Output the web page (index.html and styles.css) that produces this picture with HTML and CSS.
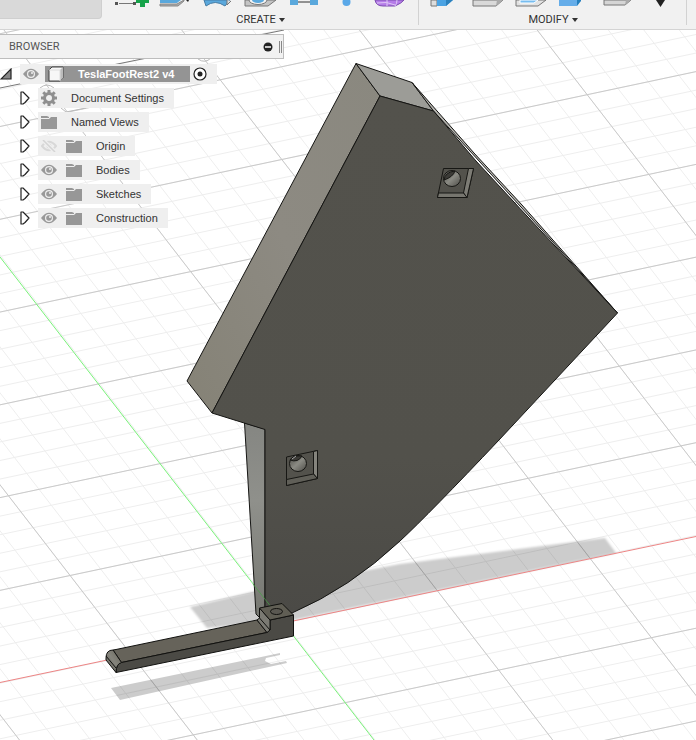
FILE: index.html
```html
<!DOCTYPE html>
<html lang="en">
<head>
<meta charset="utf-8">
<meta name="viewport" content="width=device-width, initial-scale=1">
<title>TeslaFootRest2 v4</title>
<link rel="stylesheet" href="styles.css">
</head>
<body>
<svg class="defs" aria-hidden="true">
  <symbol id="eye" viewBox="0 0 16 12"><path d="M0 6Q8-4.500 16 6Q8 16.500 0 6Z" fill="#999"/><circle cx="8" cy="6" r="4" fill="#efefef"/><circle cx="8" cy="6" r="2.800" fill="#999"/><circle cx="9" cy="5" r="1" fill="#efefef"/></symbol>
  <symbol id="eye-off" viewBox="0 0 16 12"><path d="M1 6Q8-2.500 15 6Q8 14.500 1 6Z" fill="none" stroke="#d8d8d8" stroke-width="2"/><circle cx="8" cy="6" r="2.500" fill="#d8d8d8"/><path d="M2 0L14 12" stroke="#efefef" stroke-width="4"/><path d="M2 0L14 12" stroke="#d4d4d4" stroke-width="1.500"/></symbol>
  <symbol id="folder" viewBox="0 0 16 14"><path d="M0 1H6L8 2V3H0ZM0 4H8L10 2H16V14H0Z" fill="#979797"/></symbol>
  <symbol id="gear" viewBox="0 0 16 16"><circle cx="8" cy="8" r="4.500" fill="none" stroke="#8f8f8f" stroke-width="3"/><path d="M8 0V3M8 13V16M0 8H3M13 8H16M2.300 2.300L4.500 4.500M11.500 11.500L13.700 13.700M2.300 13.700L4.500 11.500M11.500 4.500L13.700 2.300" stroke="#8f8f8f" stroke-width="3"/></symbol>
  <symbol id="twisty" viewBox="0 0 10 14"><path d="M1 1H3L9 7L5 11.500L3 13H1Z" fill="#fff" stroke="#222" stroke-width="1.200" stroke-linejoin="round"/></symbol>
</svg>

<header class="toolbar">
  <div class="workspace"></div>
  <section class="group group-create">
    <div class="tools">
      <button type="button" aria-label="Create sketch"><svg viewBox="0 0 43 7"><path d="M9 3.500H26" stroke="#777"/><path d="M6.500 2V5M24.500 2V5" stroke="#555" stroke-width="3"/><path d="M26 0H39V3H35V7H30V3H26Z" fill="#16a34a"/></svg></button>
      <button type="button" aria-label="Extrude"><svg viewBox="0 0 43 7"><path d="M7 0H28L24 3H7Z" fill="#5aa8dc"/><path d="M7 4H24L31 0V1L25 6H7Z" fill="#aaa" stroke="#888"/><path d="M33 0h3l-1 2z" fill="#222"/></svg></button>
      <button type="button" aria-label="Revolve"><svg viewBox="0 0 43 7"><path d="M8 0L10 6Q19-1 29 6L34 0Z" fill="#5aa8dc" stroke="#477da5"/><path d="M31 0V5L35 1" fill="#ddd" stroke="#777"/></svg></button>
      <button type="button" aria-label="Hole"><svg viewBox="0 0 43 7"><path d="M6 0V6H29L37 0Z" fill="#c4c4c4" stroke="#777"/><ellipse cx="19" cy="0" rx="9" ry="4.500" fill="#f5f5f5" stroke="#777"/><ellipse cx="19" cy="0" rx="6" ry="3" fill="#5aa8dc"/></svg></button>
      <button type="button" aria-label="Pattern"><svg viewBox="0 0 43 7"><path d="M16 2H28" stroke="#333"/><path d="M8 0H16V5H8ZM28 0H36V5H28Z" fill="#5aa8dc"/></svg></button>
      <button type="button" aria-label="Point"><svg viewBox="0 0 43 7"><circle cx="21.500" cy="2" r="4" fill="#5aa8e8"/></svg></button>
      <button type="button" aria-label="Form"><svg viewBox="0 0 43 7"><path d="M7 0Q8 6 15 6H27Q34 3 36 0Z" fill="#b57ce8" stroke="#7b4cae"/><path d="M19 0V6M9 3Q19 1 27 5M29 0Q29 4 27 6" fill="none" stroke="#dfc7f6"/></svg></button>
    </div>
    <button type="button" class="menu">CREATE <span class="caret"></span></button>
  </section>
  <section class="group group-modify">
    <div class="tools">
      <button type="button" aria-label="Press pull"><svg viewBox="0 0 43 7"><path d="M7 0V6H13V0Z" fill="#ddd" stroke="#777"/><path d="M13 0V6H22L29 0Z" fill="#4ba3e3"/><path d="M22 6L29 0V-1H22Z" fill="#2c81bd"/></svg></button>
      <button type="button" aria-label="Fillet"><svg viewBox="0 0 43 7"><path d="M6 0V6H29L36 0Z" fill="#d9d9d9" stroke="#777"/><path d="M29 6L30 0H36Z" fill="#aaa"/></svg></button>
      <button type="button" aria-label="Shell"><svg viewBox="0 0 43 7"><path d="M6 0V6H28L36 0Z" fill="#e2e2e2" stroke="#777"/><path d="M10 0V3H24L28 0Z" fill="#77bdf0" stroke="#fff"/></svg></button>
      <button type="button" aria-label="Combine"><svg viewBox="0 0 43 7"><path d="M6 0V6H24V0Z" fill="#65ade9"/><path d="M24 6L28 1V0H24Z" fill="#247fbe"/></svg></button>
      <button type="button" aria-label="Offset face"><svg viewBox="0 0 43 7"><path d="M8 0V5H29L35 0Z" fill="#d5d5d5" stroke="#777"/><path d="M29 5L30 0H35Z" fill="#aaa"/></svg></button>
      <button type="button" aria-label="Move"><svg viewBox="0 0 43 7"><path d="M17 0H26L21.500 7Z" fill="#222"/></svg></button>
    </div>
    <button type="button" class="menu">MODIFY <span class="caret"></span></button>
  </section>
</header>

<main class="stage">
  <svg class="scene" viewBox="0 30 696 710" preserveAspectRatio="xMinYMin slice" role="img" aria-label="3D view of the foot rest">
    <defs>
      <linearGradient id="side" x1="0" y1="1" x2="1" y2="0"><stop stop-color="#858276"/><stop offset=".5" stop-color="#8d8a82"/><stop offset="1" stop-color="#8a887f"/></linearGradient>
      <linearGradient id="front" x1="0" y1="0" x2="0" y2="1"><stop stop-color="#53524c"/><stop offset=".7" stop-color="#52514b"/><stop offset="1" stop-color="#4b4a46"/></linearGradient>
      <linearGradient id="neck" x1="0" y1="0" x2="0" y2="1"><stop stop-color="#858682"/><stop offset=".4" stop-color="#8f908b"/><stop offset="1" stop-color="#777872"/></linearGradient>
      <linearGradient id="bore" x1="0" y1="0" x2="1" y2="1"><stop stop-color="#4c4b46"/><stop offset=".5" stop-color="#8b8b84"/><stop offset="1" stop-color="#4c4b46"/></linearGradient>
      <linearGradient id="tip" x1="0" y1="1" x2="1" y2="0"><stop stop-color="#55544d"/><stop offset=".5" stop-color="#85847c"/><stop offset="1" stop-color="#68665b"/></linearGradient>
      <filter id="soft"><feGaussianBlur stdDeviation="1"/></filter>
    </defs>
    <rect x="0" y="30" width="696" height="710" fill="#fff"/>
    <g transform="matrix(30.54 -6.48 12.32 15.94 284.4 622.8)" fill="none">
      <path class="minor" d="M-12-42v60m1 0v-60m1 0v60m1 0v-60m1 0v60m1 0v-60m1 0v60m1 0v-60m1 0v60m1 0v-60m1 0v60m1 0v-60m1 0v60m1 0v-60m1 0v60m1 0v-60m1 0v60m1 0v-60m1 0v60m1 0v-60m1 0v60m1 0v-60m1 0v60m1 0v-60m1 0v60m1 0v-60m1 0v60m1 0v-60m1 0v60m1 0v-60m1 0v60m1 0v-60m1 0v60m1 0v-60m1 0v60m1 0v-60m1 0v60m1 0v-60m1 0v60"/>
      <path class="minor" d="M-14-39h44m0 1h-44m0 1h44m0 1h-44m0 1h44m0 1h-44m0 1h44m0 1h-44m0 1h44m0 1h-44m0 1h44m0 1h-44m0 1h44m0 1h-44m0 1h44m0 1h-44m0 1h44m0 1h-44m0 1h44m0 1h-44m0 1h44m0 1h-44m0 1h44m0 1h-44m0 1h44m0 1h-44m0 1h44m0 1h-44m0 1h44m0 1h-44m0 1h44m0 1h-44m0 1h44m0 1h-44m0 1h44m0 1h-44m0 1h44m0 1h-44m0 1h44m0 1h-44m0 1h44m0 1h-44m0 1h44m0 1h-44m0 1h44m0 1h-44m0 1h44m0 1h-44m0 1h44m0 1h-44"/>
      <path class="major" d="M-10-42v60m5 0v-60m10 0v60m5 0v-60m5 0v60m5 0v-60m5 0v60M-14-35h44m0 5h-44m0 5h44m0 5h-44m0 5h44m0 5h-44m0 5h44m0 10h-44m0 5h44"/>
    </g>
    <path d="M0 88L284 30" stroke="#777" stroke-width="1"/>
    <path d="M198 59q7 5 13-1M40 88q7-6 14 0M61 108l5 4 20-4" stroke="#bbb" fill="none"/>
    <g fill="#000" fill-opacity=".2">
      <path filter="url(#soft)" d="M190 607L256 591L400 564L605 538L616 553L294 620L207 628Z"/>
      <path d="M111 688L280 653V655L266 658L265 661L271 664L286 661L287 663L120 700Z"/>
    </g>
    <path d="M0 682.500L696 536.500" stroke="#ed8585"/>
    <path d="M0 257L374 740" stroke="#79f279"/>

    <g stroke="#151513" stroke-linejoin="round">
      <path d="M244.500 423L265 429V608L259 617L256 614Z" fill="url(#neck)"/>
      <path d="M356 63.500L380 96L212 413L187 381Z" fill="url(#side)"/>
      <path d="M356 63.500L412 82.500L433.500 111L380 96Z" fill="#9c9c97"/>
      <path d="M412 82.500L474 153L522 205L617.500 313L433.500 111Z" fill="#b5b4af"/>
      <path d="M380 96L433.500 111L476 161L520 208.500L617.500 313L499 440Q430 513 400 541Q350 588 292 613L265 608V429.500L212 413Z" fill="url(#front)"/>
    </g>
    <path d="M253 584L272 608" stroke="#47a447" stroke-opacity=".7"/>
    <g stroke="#171714" stroke-linejoin="round">
      <path d="M443.500 168.500H473.500L467 197.500H437.500Z" fill="#53524c"/>
      <path d="M468.500 168.500H473.500L467 197.500L463.500 193Z" fill="#7d7c75"/>
      <path d="M438.500 193H463.500L467 197.500H437.500Z" fill="#77766f"/>
      <ellipse cx="452" cy="178.500" rx="8.500" ry="8" fill="url(#bore)"/>
      <path d="M444 180Q445 172 455 171Q453 177 444 180Z" fill="#3c3b37"/>
      <path d="M286.500 457L317.500 450.500V478.500L286.500 485.500Z" fill="#53524c"/>
      <path d="M313.500 451.500L317.500 450.500V478.500L313.500 474Z" fill="#85847d"/>
      <path d="M286.500 479.500L313.500 474L317.500 478.500L286.500 485.500Z" fill="#605f58"/>
      <ellipse cx="298" cy="463.500" rx="8.500" ry="8" fill="url(#bore)"/>
      <path d="M290 460Q293 455 302 456Q298 463 290 460Z" fill="#3c3b37"/>
      <path d="M292 459l4-3" stroke="#aaa"/>
    </g>
    <g stroke="#11110f" stroke-linejoin="round">
      <path d="M116 649.500L257 620L267 632.500L121.500 662.500L113 650Z" fill="#66635a"/>
      <path d="M116 672.500Q116 664 121.500 662.500L267 632.500L270 630V620L293.500 615V636Z" fill="#4b4a45"/>
      <path d="M106 658Q106 650 113 650L121.500 662.500Q116 664 116 672.500L106 660Z" fill="url(#tip)"/>
      <path d="M106 656L116 668" fill="none"/>
      <path d="M259.500 608L270 620V630L267 632.500L257 620L259.500 618Z" fill="#7b7a73"/>
      <path d="M259.500 618L270 630" fill="none"/>
      <path d="M259.500 608L282 603.500L293.500 615L270 620Z" fill="#605e54"/>
      <ellipse cx="276.500" cy="611.500" rx="6" ry="3" fill="#5a5851"/>
    </g>
  </svg>

  <aside class="browser">
    <div class="browser-head">
      <h2>BROWSER</h2>
      <button type="button" class="collapse" aria-label="Collapse"><svg viewBox="0 0 10 10"><circle cx="5" cy="5" r="4.500" fill="#222"/><path d="M2 5H8" stroke="#fff" stroke-width="1.500"/></svg></button>
      <span class="grip"></span>
    </div>
    <ul class="tree">
      <li class="root">
        <button type="button" class="toggle toggle-root" aria-label="Collapse component"><svg viewBox="0 0 12 12"><path d="M11 1V11H1Z" fill="#888" stroke="#222" stroke-width="1.200"/></svg></button>
        <div class="pill">
          <button type="button" class="cell" aria-label="Hide"><svg class="i-eye"><use href="#eye"/></svg></button>
          <div class="tag">
            <span class="cell"><svg class="i-cube" viewBox="0 0 16 16"><path d="M1 4L4 1H15V12L12 15H1Z" fill="#f7f7f7" stroke="#444" stroke-linejoin="round"/><path d="M12 4L15 1V12L12 15Z" fill="#bbb"/><path d="M1 4H12V15" fill="none" stroke="#ddd"/></svg></span>
            <span class="label">TeslaFootRest2 v4</span>
          </div>
          <button type="button" class="cell cell-active" aria-label="Activate component"><svg class="i-active" viewBox="0 0 14 14"><circle cx="7" cy="7" r="6" fill="#fff" stroke="#222" stroke-width="1.200"/><circle cx="7" cy="7" r="2.500" fill="#222"/></svg></button>
        </div>
      </li>
      <li><button type="button" class="toggle" aria-label="Expand"><svg><use href="#twisty"/></svg></button><div class="pill"><span class="cell"><svg class="i-gear"><use href="#gear"/></svg></span><span class="label">Document Settings</span></div></li>
      <li><button type="button" class="toggle" aria-label="Expand"><svg><use href="#twisty"/></svg></button><div class="pill"><span class="cell"><svg class="i-folder"><use href="#folder"/></svg></span><span class="label">Named Views</span></div></li>
      <li><button type="button" class="toggle" aria-label="Expand"><svg><use href="#twisty"/></svg></button><div class="pill"><button type="button" class="cell" aria-label="Show"><svg class="i-eye"><use href="#eye-off"/></svg></button><span class="cell"><svg class="i-folder"><use href="#folder"/></svg></span><span class="label">Origin</span></div></li>
      <li><button type="button" class="toggle" aria-label="Expand"><svg><use href="#twisty"/></svg></button><div class="pill"><button type="button" class="cell" aria-label="Hide"><svg class="i-eye"><use href="#eye"/></svg></button><span class="cell"><svg class="i-folder"><use href="#folder"/></svg></span><span class="label">Bodies</span></div></li>
      <li><button type="button" class="toggle" aria-label="Expand"><svg><use href="#twisty"/></svg></button><div class="pill"><button type="button" class="cell" aria-label="Hide"><svg class="i-eye"><use href="#eye"/></svg></button><span class="cell"><svg class="i-folder"><use href="#folder"/></svg></span><span class="label">Sketches</span></div></li>
      <li><button type="button" class="toggle" aria-label="Expand"><svg><use href="#twisty"/></svg></button><div class="pill"><button type="button" class="cell" aria-label="Hide"><svg class="i-eye"><use href="#eye"/></svg></button><span class="cell"><svg class="i-folder"><use href="#folder"/></svg></span><span class="label">Construction</span></div></li>
    </ul>
  </aside>
</main>
</body>
</html>
```
FILE: styles.css
```css
* { box-sizing: border-box; }

body {
  margin: 0;
  min-height: 100vh;
  display: flex;
  flex-direction: column;
  background: #fff;
  color: #333;
  font-family: "Liberation Sans", Arial, sans-serif;
  font-size: 11px;
  line-height: 20px;
}

button {
  margin: 0;
  padding: 0;
  border: 0;
  background: none;
  color: inherit;
  font: inherit;
}

svg { display: block; }

.defs { position: absolute; width: 0; height: 0; }

/* Toolbar */
.toolbar {
  display: flex;
  align-items: flex-start;
  background: #f1f1f1;
  border-bottom: 1px solid #d4d4d4;
  font-family: Roboto, sans-serif;
}

.workspace {
  width: 102px;
  height: 19px;
  background: #d9d9d9;
  border: 1px solid #cfcfcf;
  border-width: 0 1px 1px 0;
  border-radius: 0 0 4px 0;
}

.group {
  display: flex;
  flex-direction: column;
  align-items: center;
  height: 29px;
  padding: 0 5px;
  background: linear-gradient(#d2d2d2, #d2d2d2) right top / 1px 25px no-repeat;
}

.group-create { padding: 0 8px; }

.tools { display: flex; height: 7px; }
.tools button, .tools svg { width: 43px; height: 7px; }

.menu {
  display: flex;
  align-items: center;
  gap: 3px;
  margin-top: 3px;
  line-height: 20px;
}

.caret {
  border: 3px solid transparent;
  border-top: 4px solid #333;
  border-bottom: 0;
}

/* Modelling canvas */
.stage {
  position: relative;
  flex: 1;
  padding-top: 4px;
  overflow: hidden;
}

.scene { position: absolute; inset: 0; width: 100%; height: 100%; }
.minor { stroke: #eee; vector-effect: non-scaling-stroke; }
.major { stroke: #cacaca; vector-effect: non-scaling-stroke; }

/* Browser panel */
.browser { position: relative; width: 284px; }

.browser-head {
  display: flex;
  align-items: center;
  height: 25px;
  padding: 0 1px 0 9px;
  background: #f1f1f1;
  border: 1px solid #bdbdbd;
  border-left: 0;
}

.browser-head h2 {
  flex: 1;
  margin: 0;
  color: #555;
  font: 11px/20px Roboto, sans-serif;
}

.collapse svg { width: 10px; height: 10px; }

.grip {
  width: 3px;
  height: 12px;
  margin-left: 6px;
  border: 1px solid #888;
  border-width: 0 1px;
}

.tree {
  display: flex;
  flex-direction: column;
  align-items: flex-start;
  gap: 4px;
  margin: 5px 0 0;
  padding: 0;
  list-style: none;
}

.tree li { display: flex; height: 20px; padding-left: 20px; }
.tree .root { padding-left: 0; }

.toggle { display: flex; align-items: center; width: 18px; }
.toggle svg { width: 10px; height: 14px; }
.toggle-root { width: 20px; }
.toggle-root svg { width: 12px; height: 12px; }

.pill {
  display: flex;
  align-items: center;
  gap: 3px;
  padding-right: 10px;
  background: #efefef;
}

.cell {
  display: flex;
  align-items: center;
  justify-content: center;
  width: 22px;
  height: 16px;
}

.label { margin-left: 8px; white-space: nowrap; }

.tag {
  display: flex;
  align-items: center;
  gap: 3px;
  height: 16px;
  padding-right: 16px;
  background: #949494;
  color: #fff;
  font-weight: bold;
}

.cell-active { width: 14px; }

.i-eye { width: 16px; height: 12px; }
.i-folder { width: 16px; height: 14px; }
.i-gear, .i-cube { width: 16px; height: 16px; }
.i-active { width: 14px; height: 14px; }
```
